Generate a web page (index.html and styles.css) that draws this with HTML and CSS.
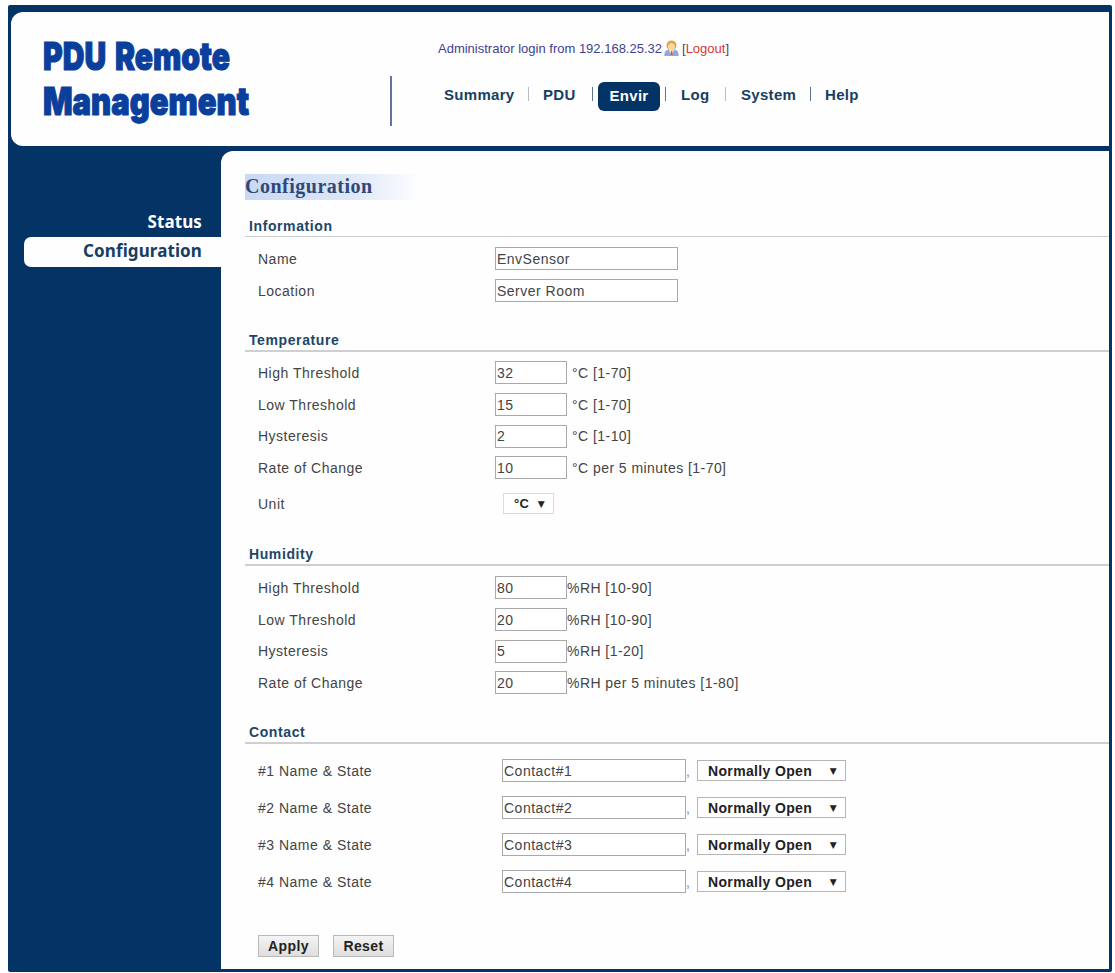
FILE: index.html
```html
<!DOCTYPE html>
<html lang="en">
<head>
    <meta charset="UTF-8">
    <title>PDU Remote Management</title>
    <link rel="stylesheet" href="styles.css">
</head>
<body>
    <div class="frame">
        <header class="header">
            <svg class="logo" width="230" height="100" viewBox="0 0 230 100">
                <text x="0" y="36" textLength="187" lengthAdjust="spacingAndGlyphs">PDU Remote</text>
                <text x="0" y="81" textLength="206" lengthAdjust="spacingAndGlyphs">Management</text>
            </svg>
            <div class="divider"></div>
            <div class="top">
                <div class="login">
                    <span class="login-text">Administrator login from 192.168.25.32</span>
                    <svg class="user-icon" width="15" height="17" viewBox="0 0 15 17">
                        <path d="M0.3 16 Q0 10 5 9.5 L10 9.5 Q15 10 14.7 16 Z" fill="#8fa9e0"/>
                        <path d="M4.5 9.5 L7.5 15 L10.5 9.5 Z" fill="#f6e3d0"/>
                        <path d="M7.2 11 h1 l.5 4 h-2 z" fill="#c4574a"/>
                        <circle cx="7.5" cy="5.4" r="5" fill="#e0a548"/>
                        <ellipse cx="7.5" cy="6.8" rx="3.4" ry="3.6" fill="#fbd9a5"/>
                    </svg>
                    <span class="logout">[<a>Logout</a>]</span>
                </div>
                <nav class="nav">
                    <a class="summary">Summary</a><i></i>
                    <a class="pdu">PDU</a><i class="dark"></i>
                    <a class="active">Envir</a><i class="dark"></i>
                    <a class="log">Log</a><i></i>
                    <a class="system">System</a><i class="dark"></i>
                    <a class="help">Help</a>
                </nav>
            </div>
        </header>

        <div class="main">
            <aside class="sidebar">
                <a class="side-item">Status</a>
                <a class="side-item selected">Configuration</a>
            </aside>

            <form class="content">
                <h1>Configuration</h1>

                <section class="information">
                    <h2>Information</h2>
                    <div class="row"><label>Name</label><input type="text" value="EnvSensor"></div>
                    <div class="row"><label>Location</label><input type="text" value="Server Room"></div>
                </section>

                <section class="temperature">
                    <h2>Temperature</h2>
                    <div class="row"><label>High Threshold</label><input class="short" type="text" value="32"><span>°C [1-70]</span></div>
                    <div class="row"><label>Low Threshold</label><input class="short" type="text" value="15"><span>°C [1-70]</span></div>
                    <div class="row"><label>Hysteresis</label><input class="short" type="text" value="2"><span>°C [1-10]</span></div>
                    <div class="row"><label>Rate of Change</label><input class="short" type="text" value="10"><span>°C per 5 minutes [1-70]</span></div>
                    <div class="row unit"><label>Unit</label><button type="button" class="select">°C<b>▼</b></button></div>
                </section>

                <section class="humidity">
                    <h2>Humidity</h2>
                    <div class="row"><label>High Threshold</label><input class="short" type="text" value="80"><span>%RH [10-90]</span></div>
                    <div class="row"><label>Low Threshold</label><input class="short" type="text" value="20"><span>%RH [10-90]</span></div>
                    <div class="row"><label>Hysteresis</label><input class="short" type="text" value="5"><span>%RH [1-20]</span></div>
                    <div class="row"><label>Rate of Change</label><input class="short" type="text" value="20"><span>%RH per 5 minutes [1-80]</span></div>
                </section>

                <section class="contact">
                    <h2>Contact</h2>
                    <div class="row"><label>#1 Name &amp; State</label><input type="text" value="Contact#1"><em>,</em><button type="button" class="select">Normally Open<b>▼</b></button></div>
                    <div class="row"><label>#2 Name &amp; State</label><input type="text" value="Contact#2"><em>,</em><button type="button" class="select">Normally Open<b>▼</b></button></div>
                    <div class="row"><label>#3 Name &amp; State</label><input type="text" value="Contact#3"><em>,</em><button type="button" class="select">Normally Open<b>▼</b></button></div>
                    <div class="row"><label>#4 Name &amp; State</label><input type="text" value="Contact#4"><em>,</em><button type="button" class="select">Normally Open<b>▼</b></button></div>
                </section>

                <div class="buttons">
                    <button type="button" class="btn">Apply</button>
                    <button type="button" class="btn">Reset</button>
                </div>
            </form>
        </div>
    </div>
</body>
</html>
```

FILE: styles.css
```css
* {
    box-sizing: border-box;
}
body {
    margin: 0;
    padding: 5px 3px 1px 8px;
    height: 973px;
    overflow: hidden;
    background: #fff;
    font-family: "Liberation Sans", Arial, sans-serif;
    font-size: 14px;
    color: #444;
}
.frame {
    height: 967px;
    padding: 7px 3px 3px;
    background: #033465;
    border-radius: 2px;
}

/* header */
.header {
    display: flex;
    height: 134px;
    background: #fefefe;
    border-radius: 12px 0 0 12px;
}
.logo {
    margin: 22px 0 0 32px;
    overflow: visible;
}
.logo text {
    font-family: Inter, Roboto, sans-serif;
    font-weight: 900;
    font-size: 39px;
    word-spacing: 4px;
    fill: #0b3f9c;
    stroke: #0b3f9c;
    stroke-width: 1.2px;
}
.divider {
    width: 2px;
    height: 50px;
    margin: 64px 0 0 117px;
    background: #5f769f;
}
.top {
    padding: 26px 0 0 46px;
}
.login {
    display: flex;
    align-items: center;
    height: 20px;
    font-size: 13px;
    color: #3f4192;
    white-space: nowrap;
}
.login-text {
    width: 224px;
}
.user-icon {
    margin: 0 3px 0 2px;
}
.logout {
    font-size: 13px;
}
.logout a {
    color: #d8392f;
}
.nav {
    display: flex;
    align-items: center;
    height: 30px;
    margin: 22px 0 0 6px;
    font-size: 15px;
    font-weight: bold;
    letter-spacing: 0.3px;
    color: #173e63;
}
.nav i {
    width: 1px;
    height: 14px;
    margin-top: -2px;
    background: #b3bdcb;
}
.nav i.dark {
    background: #5b7493;
}
.nav a {
    white-space: nowrap;
    margin-top: -2px;
}
.nav .summary {
    width: 84px;
}
.nav .pdu {
    width: 63px;
    padding-left: 14px;
}
.nav .active {
    width: 62px;
    height: 29px;
    margin: 2px 5px 0 5px;
    line-height: 28px;
    text-align: center;
    color: #fff;
    background: #033465;
    border-radius: 6px;
}
.nav .log {
    width: 59px;
    padding-left: 15px;
}
.nav .system {
    width: 84px;
    padding-left: 15px;
}
.nav .help {
    padding-left: 14px;
}

/* sidebar */
.main {
    display: flex;
    height: 818px;
    margin-top: 5px;
}
.sidebar {
    width: 210px;
    padding: 57px 0 0 13px;
}
.side-item {
    display: block;
    height: 29px;
    padding-right: 19px;
    line-height: 28px;
    text-align: right;
    font-family: "Noto Sans", sans-serif;
    font-size: 17px;
    font-weight: bold;
    letter-spacing: 0.1px;
    color: #fff;
}
.side-item.selected {
    height: 30px;
    line-height: 27px;
    background: #fefefe;
    color: #173e63;
    border-radius: 7px 0 0 7px;
}

/* content */
.content {
    flex: 1;
    padding: 23px 0 0 24px;
    background: #fefefe;
    border-top-left-radius: 12px;
}
h1 {
    width: 175px;
    height: 26px;
    margin: 0 0 17px;
    line-height: 24px;
    font-family: "Liberation Serif", serif;
    font-size: 20px;
    letter-spacing: 0.5px;
    color: #2f4878;
    background: linear-gradient(90deg, #c9d9f3, #dde7f8 60%, #fefefe);
}
h2 {
    height: 20px;
    margin: 0 0 5px;
    padding-left: 4px;
    line-height: 17px;
    font-size: 14px;
    letter-spacing: 0.6px;
    color: #1c4668;
    border-bottom: 2px solid #cdcfd0;
}
.information {
    height: 115px;
}
.information h2 {
    margin-bottom: 6px;
    line-height: 18px;
    border-bottom-width: 1px;
}
.temperature {
    height: 214px;
}
.humidity {
    height: 178px;
}
.humidity h2 {
    margin-bottom: 6px;
}
.contact {
    height: 211px;
}
.contact h2 {
    margin-bottom: 8px;
}
.row {
    display: flex;
    align-items: center;
    height: 31.7px;
    letter-spacing: 0.5px;
}
.row label {
    width: 250px;
    padding-left: 13px;
}
.row input {
    width: 183px;
    height: 23px;
    padding: 0 0 0 1px;
    border: 1px solid #a9a9a9;
    border-radius: 0;
    font: inherit;
    letter-spacing: inherit;
    color: #444;
    background: #fff;
}
.row .short {
    width: 72px;
}
.row span {
    letter-spacing: 0.45px;
}
.temperature span {
    padding-left: 5px;
}
.unit {
    height: 40px;
}
.select {
    display: flex;
    align-items: center;
    justify-content: space-between;
    width: 149px;
    height: 21px;
    padding: 0 8px 0 10px;
    border: 1px solid #b5b5b5;
    background: #fff;
    font: bold 14px "Liberation Sans", Arial, sans-serif;
    letter-spacing: 0.35px;
    color: #222;
}
.select b {
    font: 9px "DejaVu Sans", sans-serif;
}
.unit .select {
    width: 51px;
    margin-left: 8px;
    font-size: 13px;
    border-color: #dcdcdc;
}
.contact .row {
    height: 37px;
}
.contact label {
    width: 257px;
}
.contact input {
    width: 184px;
}
.contact em {
    width: 11px;
    font-style: normal;
    color: #888;
}
.buttons {
    display: flex;
    gap: 14px;
    padding-left: 13px;
}
.btn {
    width: 61px;
    height: 22px;
    padding: 0;
    border: 1px solid #b9b9b9;
    background: linear-gradient(#f4f4f4, #dedede);
    font: bold 14px "Liberation Sans", Arial, sans-serif;
    letter-spacing: 0.4px;
    color: #222;
}
```
